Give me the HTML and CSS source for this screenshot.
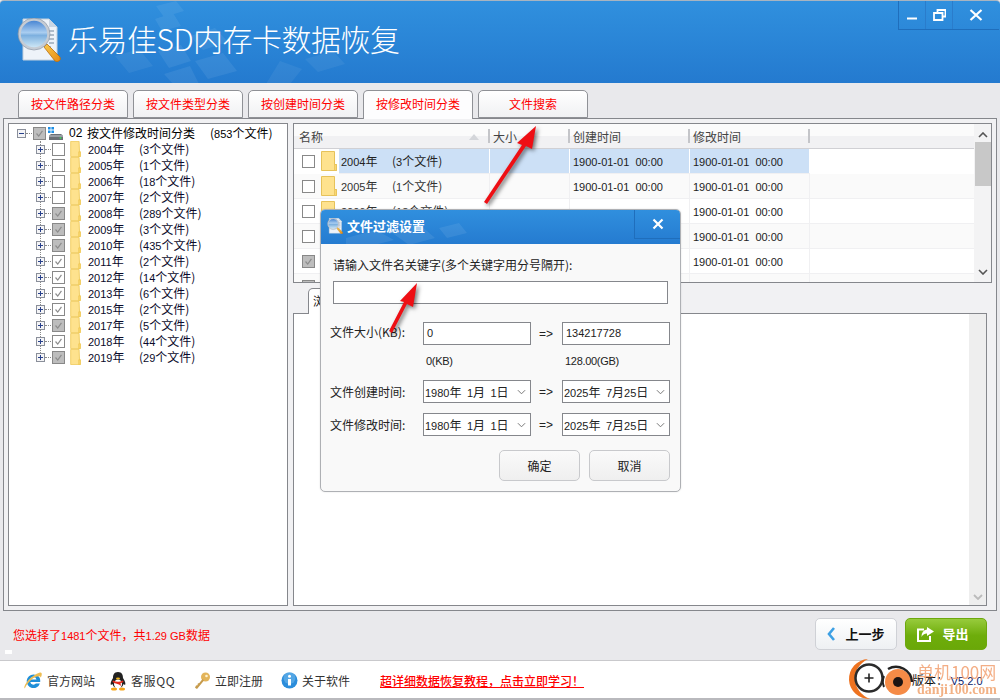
FILE: index.html
```html
<!DOCTYPE html>
<html lang="zh-CN">
<head>
<meta charset="utf-8">
<title>乐易佳SD内存卡数据恢复</title>
<link rel="stylesheet" href="styles.css">
</head>
<body>
<svg class="defs" width="0" height="0" aria-hidden="true">
  <defs>
    <linearGradient id="lens" x1="0" y1="0" x2="0" y2="1"><stop offset="0" stop-color="#3f7fd0"/><stop offset=".45" stop-color="#a9cdf0"/><stop offset=".55" stop-color="#7db0df"/><stop offset="1" stop-color="#d5ecf8"/></linearGradient>
    <linearGradient id="hand" x1="0" y1="0" x2="1" y2="1"><stop offset="0" stop-color="#f9c94a"/><stop offset="1" stop-color="#e88a12"/></linearGradient>
    <symbol id="logo" viewBox="0 0 44 44">
      <path d="M6 1h26l8 8v33H6z" fill="#eef3f9" stroke="#c3cfdc"/>
      <path d="M32 1v8h8z" fill="#c9d6e4"/>
      <path d="M29 13h8M31 17h6M32 21h5M32 25h5M32 29h2" stroke="#9aaabb" stroke-width="1.5"/>
      <path d="M27 29l3-3 13 13q1 3-1 4t-4 0z" fill="url(#hand)" stroke="#b86f10" stroke-width=".8"/>
      <circle cx="17" cy="16" r="14.5" fill="url(#lens)" stroke="#c6ccd4" stroke-width="2.6"/>
      <circle cx="17" cy="16" r="16" fill="none" stroke="#8b95a3" stroke-width=".7"/>
    </symbol>
    <symbol id="folder" viewBox="0 0 13 20">
      <path d="M.5.5h10.5l.5 13h1v6H.5z" fill="#fee28e" stroke="#eec650"/>
      <path d="M10.5 13.5h2v6h-2z" fill="#fbd76f" stroke="#eec650" stroke-width=".8"/>
    </symbol>
    <symbol id="folder-big" viewBox="0 0 16 20">
      <path d="M.5.5h13v13h2v6H.5z" fill="#fee28e" stroke="#e6c25a"/>
      <path d="M13.5 13.5h2v6h-2z" fill="#fbd76f" stroke="#e6c25a" stroke-width=".8"/>
    </symbol>
    <symbol id="plus" viewBox="0 0 9 9">
      <rect x=".5" y=".5" width="8" height="8" fill="#f4f4f6" stroke="#8a8f9a"/>
      <path d="M2 4.5h5M4.5 2v5" stroke="#27408b"/>
    </symbol>
    <symbol id="tick" viewBox="0 0 13 13">
      <path d="M3 6.5l2.6 3L10 3.5" fill="none" stroke="#8c8c8c" stroke-width="1.4"/>
    </symbol>
    <symbol id="chev" viewBox="0 0 10 6">
      <path d="M1 1l4 4 4-4" fill="none" stroke="#777" stroke-width="1.1"/>
    </symbol>
  </defs>
</svg>

<div class="window">
  <header class="titlebar">
    <svg class="deco" viewBox="0 0 1000 83" aria-hidden="true">
      <path d="M156 5l20-5 8 10-20 6zM155 18l18-6 8 13-19 5zM190 35l25-8 13 14-25 8zM195 60l28-8 14 18-29 8zM158 50l23-6 10 16-22 7zM190 65l-26 8 9 10h26z" fill="#fff" opacity=".07"/>
      <path d="M115 55l24-7 14 17-24 7zM305 58l28-8 12 13-27 8zM280 60l22 8-12 15h-24z" fill="#fff" opacity=".06"/>
    </svg>
    <svg class="app-icon"><use href="#logo"/></svg>
    <h1 class="app-title">乐易佳SD内存卡数据恢复</h1>
    <div class="wincontrols">
      <div class="winbtn"><svg width="12" height="12" viewBox="0 0 12 12"><path d="M1 9.500h10" stroke="#fff" stroke-width="2"/></svg></div>
      <div class="winbtn"><svg width="14" height="12" viewBox="0 0 14 12"><path d="M5.500 3.500V1h8v6.500h-3M2 4h8.500v7H2z" fill="none" stroke="#fff" stroke-width="1.800"/></svg></div>
      <div class="winbtn"><svg width="14" height="12" viewBox="0 0 14 12"><path d="M1.500 1l11 10M12.500 1l-11 10" stroke="#fff" stroke-width="2.200"/></svg></div>
    </div>
  </header>

  <nav class="tabs">
    <div class="tab">按文件路径分类</div>
    <div class="tab">按文件类型分类</div>
    <div class="tab">按创建时间分类</div>
    <div class="tab tab-active">按修改时间分类</div>
    <div class="tab">文件搜索</div>
  </nav>

  <main class="panel">
    <section class="tree">
      <div class="tree-root">
        <span class="root-exp"><i></i></span><span class="dots"></span>
        <span class="chk chk-fill"><svg><use href="#tick"/></svg></span>
        <svg class="drive" width="15" height="15" viewBox="0 0 15 15"><path d="M0 1h2.600v2.600H0zM3.400 1H6v2.600H3.400zM0 4.400h2.600V7H0zM3.400 4.400H6V7H3.400z" fill="#1e8fe6"/><path d="M1 9.500L3 8h10l2 1.500V14H1z" fill="#6b6f76"/><path d="M1 9.500h14v1H1z" fill="#c9cdd2"/><circle cx="12.500" cy="12" r="1" fill="#3ecf5a"/></svg>
        <span class="root-num">02</span><span class="root-name">按文件修改时间分类</span><span class="root-count">(<b class="n">853</b>个文件)</span>
      </div>
      <div class="tree-list">
        <div class="node"><svg class="exp-p"><use href="#plus"/></svg><span class="dots"></span><span class="chk"></span><svg class="fold"><use href="#folder"/></svg><span class="yr"><b class="n">2004</b>年</span><span class="ct">(<b class="n">3</b>个文件)</span></div>
        <div class="node"><svg class="exp-p"><use href="#plus"/></svg><span class="dots"></span><span class="chk"></span><svg class="fold"><use href="#folder"/></svg><span class="yr"><b class="n">2005</b>年</span><span class="ct">(<b class="n">1</b>个文件)</span></div>
        <div class="node"><svg class="exp-p"><use href="#plus"/></svg><span class="dots"></span><span class="chk"></span><svg class="fold"><use href="#folder"/></svg><span class="yr"><b class="n">2006</b>年</span><span class="ct">(<b class="n">18</b>个文件)</span></div>
        <div class="node"><svg class="exp-p"><use href="#plus"/></svg><span class="dots"></span><span class="chk"></span><svg class="fold"><use href="#folder"/></svg><span class="yr"><b class="n">2007</b>年</span><span class="ct">(<b class="n">2</b>个文件)</span></div>
        <div class="node"><svg class="exp-p"><use href="#plus"/></svg><span class="dots"></span><span class="chk chk-fill"><svg><use href="#tick"/></svg></span><svg class="fold"><use href="#folder"/></svg><span class="yr"><b class="n">2008</b>年</span><span class="ct">(<b class="n">289</b>个文件)</span></div>
        <div class="node"><svg class="exp-p"><use href="#plus"/></svg><span class="dots"></span><span class="chk chk-fill"><svg><use href="#tick"/></svg></span><svg class="fold"><use href="#folder"/></svg><span class="yr"><b class="n">2009</b>年</span><span class="ct">(<b class="n">3</b>个文件)</span></div>
        <div class="node"><svg class="exp-p"><use href="#plus"/></svg><span class="dots"></span><span class="chk chk-fill"><svg><use href="#tick"/></svg></span><svg class="fold"><use href="#folder"/></svg><span class="yr"><b class="n">2010</b>年</span><span class="ct">(<b class="n">435</b>个文件)</span></div>
        <div class="node"><svg class="exp-p"><use href="#plus"/></svg><span class="dots"></span><span class="chk"><svg><use href="#tick"/></svg></span><svg class="fold"><use href="#folder"/></svg><span class="yr"><b class="n">2011</b>年</span><span class="ct">(<b class="n">2</b>个文件)</span></div>
        <div class="node"><svg class="exp-p"><use href="#plus"/></svg><span class="dots"></span><span class="chk"><svg><use href="#tick"/></svg></span><svg class="fold"><use href="#folder"/></svg><span class="yr"><b class="n">2012</b>年</span><span class="ct">(<b class="n">14</b>个文件)</span></div>
        <div class="node"><svg class="exp-p"><use href="#plus"/></svg><span class="dots"></span><span class="chk"><svg><use href="#tick"/></svg></span><svg class="fold"><use href="#folder"/></svg><span class="yr"><b class="n">2013</b>年</span><span class="ct">(<b class="n">6</b>个文件)</span></div>
        <div class="node"><svg class="exp-p"><use href="#plus"/></svg><span class="dots"></span><span class="chk"><svg><use href="#tick"/></svg></span><svg class="fold"><use href="#folder"/></svg><span class="yr"><b class="n">2015</b>年</span><span class="ct">(<b class="n">2</b>个文件)</span></div>
        <div class="node"><svg class="exp-p"><use href="#plus"/></svg><span class="dots"></span><span class="chk chk-fill"><svg><use href="#tick"/></svg></span><svg class="fold"><use href="#folder"/></svg><span class="yr"><b class="n">2017</b>年</span><span class="ct">(<b class="n">5</b>个文件)</span></div>
        <div class="node"><svg class="exp-p"><use href="#plus"/></svg><span class="dots"></span><span class="chk"><svg><use href="#tick"/></svg></span><svg class="fold"><use href="#folder"/></svg><span class="yr"><b class="n">2018</b>年</span><span class="ct">(<b class="n">44</b>个文件)</span></div>
        <div class="node"><svg class="exp-p"><use href="#plus"/></svg><span class="dots"></span><span class="chk chk-fill"><svg><use href="#tick"/></svg></span><svg class="fold"><use href="#folder"/></svg><span class="yr"><b class="n">2019</b>年</span><span class="ct">(<b class="n">29</b>个文件)</span></div>
      </div>
    </section>

    <section class="right">
      <div class="list">
        <div class="table">
          <div class="thead">
            <div class="th th-name">名称<svg class="sort" width="10" height="6" viewBox="0 0 10 6"><path d="M5 0l5 6H0z" fill="#d4d6da"/></svg></div>
            <div class="th">大小</div>
            <div class="th">创建时间</div>
            <div class="th">修改时间</div>
            <div class="th-rest"></div>
          </div>
          <div class="row row-sel"><div class="c-name"><span class="halo"><span class="chk"></span><svg class="fold-b"><use href="#folder-big"/></svg></span><span class="nm"><b class="n">2004</b>年</span><span class="nc">(<b class="n">3</b>个文件)</span></div><div class="c"></div><div class="c c-date">1900-01-01  00:00</div><div class="c c-date">1900-01-01  00:00</div></div>
          <div class="row row-alt"><div class="c-name"><span class="halo"><span class="chk"></span><svg class="fold-b"><use href="#folder-big"/></svg></span><span class="nm"><b class="n">2005</b>年</span><span class="nc">(<b class="n">1</b>个文件)</span></div><div class="c"></div><div class="c c-date">1900-01-01  00:00</div><div class="c c-date">1900-01-01  00:00</div></div>
          <div class="row"><div class="c-name"><span class="halo"><span class="chk"></span><svg class="fold-b"><use href="#folder-big"/></svg></span><span class="nm"><b class="n">2006</b>年</span><span class="nc">(<b class="n">18</b>个文件)</span></div><div class="c"></div><div class="c c-date"></div><div class="c c-date">1900-01-01  00:00</div></div>
          <div class="row row-alt"><div class="c-name"><span class="halo"><span class="chk"></span><svg class="fold-b"><use href="#folder-big"/></svg></span></div><div class="c"></div><div class="c c-date"></div><div class="c c-date">1900-01-01  00:00</div></div>
          <div class="row"><div class="c-name"><span class="halo"><span class="chk chk-fill"><svg><use href="#tick"/></svg></span><svg class="fold-b"><use href="#folder-big"/></svg></span></div><div class="c"></div><div class="c c-date"></div><div class="c c-date">1900-01-01  00:00</div></div>
          <div class="row row-alt"><div class="c-name"><span class="halo"><span class="chk chk-fill"></span></span></div><div class="c"></div><div class="c c-date"></div><div class="c c-date"></div></div>
        </div>
        <div class="vscroll">
          <svg class="sb-up" width="10" height="6" viewBox="0 0 10 6"><path d="M1 5l4-4 4 4" fill="none" stroke="#555" stroke-width="1.600"/></svg>
          <div class="thumb"></div>
          <svg class="sb-down" width="10" height="6" viewBox="0 0 10 6"><path d="M1 1l4 4 4-4" fill="none" stroke="#555" stroke-width="1.600"/></svg>
        </div>
      </div>
      <div class="subtab">浏览</div>
      <div class="preview">
        <div class="vscroll-flat"><svg width="10" height="6" viewBox="0 0 10 6"><path d="M1 1l4 4 4-4" fill="none" stroke="#bbb" stroke-width="1.800"/></svg></div>
      </div>
    </section>
  </main>

  <div class="status">
    <div class="status-text">您选择了<b class="n">1481</b>个文件，共<b class="n">1.29 GB</b>数据</div>
    <div class="actions">
      <div class="btn btn-back"><svg width="9" height="14" viewBox="0 0 9 14"><path d="M7 1L2 7l5 6" fill="none" stroke="#3da0e4" stroke-width="2.600"/></svg>上一步</div>
      <div class="btn btn-export"><svg width="17" height="15" viewBox="0 0 17 15"><path d="M7 2.500H1v11.500h12V9" fill="none" stroke="#fff" stroke-width="2"/><path d="M10 0l7 4.500-7 4.500V6.500Q6 6.500 4.500 10 4.500 3 10 2.500z" fill="#fff"/></svg>导出</div>
    </div>
  </div>
  <span class="grip"></span>

  <footer class="footer">
    <div class="flink">
      <svg width="20" height="20" viewBox="0 0 20 20"><path d="M10.500 3.500a6.800 6.800 0 1 0 6.400 9h-4a3.200 3.200 0 0 1-5.600-1.600h9.900c.6-4.500-2.400-7.400-6.700-7.400zM7.300 8.400a3.200 3.200 0 0 1 6.200 0z" fill="#1f8fd8" fill-rule="evenodd"/><path d="M1.500 17.500C0 14.500 8 4 17 1.500c2.500-.5 2 3 .8 5C17 3.500 9 5.500 3 15c-.5 1-1 2-1.500 2.500z" fill="#edbd53"/></svg>
      <span>官方网站</span>
    </div>
    <div class="flink">
      <svg width="18" height="20" viewBox="0 0 18 20"><path d="M9 1c4 0 5 3 5 6 2 3 3 6 2 7l-1.500-1c-.5 2-1.500 3-2.500 3.500H6C5 16 4 15 3.500 13L2 14C1 13 2 10 4 7c0-3 1-6 5-6z" fill="#222"/><ellipse cx="9" cy="13" rx="4" ry="4.500" fill="#fff"/><path d="M4 9.500q5 2.500 10 0l.5 1.500q-2 1-3 1.300l.5 2.700-2-1.500Q5 12 3.500 11z" fill="#e22a1c"/><ellipse cx="9" cy="7.500" rx="2" ry="1" fill="#f5b81a"/><ellipse cx="5" cy="18" rx="3" ry="1.500" fill="#f5a51a"/><ellipse cx="13" cy="18" rx="3" ry="1.500" fill="#f5a51a"/></svg>
      <span class="qq">客服QQ</span>
    </div>
    <div class="flink">
      <svg width="16" height="18" viewBox="0 0 16 18"><circle cx="10.500" cy="5" r="4.500" fill="#e3b45a"/><circle cx="11.500" cy="4" r="1.300" fill="#fff3cf"/><path d="M7.500 7l1.500 1.500L2 17l-2-1.200 1-2.300 1.500-.3.300-1.700 1.500-.5z" fill="#c69b4d"/></svg>
      <span>立即注册</span>
    </div>
    <div class="flink">
      <svg width="17" height="17" viewBox="0 0 17 17"><circle cx="8.500" cy="8.500" r="8" fill="#2b8ddb"/><circle cx="8.500" cy="6" r="6" fill="#7cc0f0" opacity=".5"/><circle cx="8.500" cy="4.200" r="1.500" fill="#fff"/><path d="M7 7h3v6.500H7z" fill="#fff"/></svg>
      <span>关于软件</span>
    </div>
    <a class="promo" href="#">超详细数据恢复教程，点击立即学习！</a>
    <span class="version">版本： <b class="v">V5.2.0</b></span>
  </footer>

  <div class="watermark">
    <svg class="wm-logo" width="70" height="44" viewBox="0 0 70 44"><path d="M20 2A20 20 0 0 0 22 42Q8 36 7 22 7 9 20 2z" fill="#ee7320"/><circle cx="21" cy="21" r="13.500" fill="#fff" stroke="#2b2b2b" stroke-width="2.500"/><path d="M16.500 21h9M21 16.500v9" stroke="#222" stroke-width="1.600"/><circle cx="50" cy="25" r="13" fill="#f58b47"/><circle cx="50" cy="25" r="5" fill="#1d1412"/><path d="M40 12a16 16 0 0 1 24 13" fill="none" stroke="#222" stroke-width="2.500"/><path d="M36 30a14 14 0 0 1 0-11" fill="none" stroke="#222" stroke-width="2"/></svg>
    <span class="wm-cn">单机100网</span>
    <span class="wm-en">danji100.com</span>
  </div>

  <div class="dialog">
    <div class="dlg-head">
      <svg class="dlg-deco" viewBox="0 0 360 35" aria-hidden="true"><path d="M25 28l30-8 18 10-20 5H25zM70 22l28-8 16 14-26 7zM118 18l20-5 8 10-20 5z" fill="#fff" opacity=".08"/></svg>
      <svg class="dlg-icon"><use href="#logo"/></svg>
      <span class="dlg-title">文件过滤设置</span>
      <div class="dlg-close"><svg width="12" height="12" viewBox="0 0 12 12"><path d="M1.500 1.500l9 9M10.500 1.500l-9 9" stroke="#fff" stroke-width="2.200"/></svg></div>
    </div>
    <div class="dlg-body">
      <div class="kw-label">请输入文件名关键字(多个关键字用分号隔开):</div>
      <div class="kw-input"></div>
      <div class="form">
        <div class="lbl lbl-size">文件大小(KB):</div><div class="field">0</div><div class="arr">=&gt;</div><div class="field">134217728</div>
        <div></div><div class="hint">0(KB)</div><div></div><div class="hint">128.00(GB)</div>
        <div class="lbl">文件创建时间:</div><div class="field field-d"><b class="n">1980</b>年&nbsp;&nbsp;<b class="n">1</b>月&nbsp;&nbsp;<b class="n">1</b>日<svg><use href="#chev"/></svg></div><div class="arr">=&gt;</div><div class="field field-d"><b class="n">2025</b>年&nbsp;&nbsp;<b class="n">7</b>月<b class="n">25</b>日<svg><use href="#chev"/></svg></div>
        <div class="lbl">文件修改时间:</div><div class="field field-d"><b class="n">1980</b>年&nbsp;&nbsp;<b class="n">1</b>月&nbsp;&nbsp;<b class="n">1</b>日<svg><use href="#chev"/></svg></div><div class="arr">=&gt;</div><div class="field field-d"><b class="n">2025</b>年&nbsp;&nbsp;<b class="n">7</b>月<b class="n">25</b>日<svg><use href="#chev"/></svg></div>
      </div>
      <div class="dlg-actions">
        <div class="dlg-btn">确定</div>
        <div class="dlg-btn">取消</div>
      </div>
    </div>
  </div>

  <svg class="arrows" viewBox="0 0 1000 700" aria-hidden="true">
    <path d="M536 126L532 149 526 146 487 204 484 202 522 145 517 143z" fill="#ee0f14"/>
    <path d="M417 283L413 307 407 304 392 333 389 331 404 302 400 301z" fill="#ee0f14"/>
  </svg>
</div>
</body>
</html>
```
FILE: styles.css
```css
* { box-sizing: border-box; }
html, body { margin: 0; padding: 0; }
body {
  width: 1000px; height: 700px; overflow: hidden;
  font: 12px/16px "Noto Sans CJK SC", "Liberation Sans", sans-serif;
  color: #111; background: #fff;
}
.defs { position: absolute; }
.n { font: 400 11px/16px "Liberation Sans", sans-serif; }

.window {
  position: relative; width: 1000px; height: 700px;
  display: flex; flex-direction: column;
  background: #e9e9ec;
  border-bottom: 2px solid #b9b9bd;
}

/* title bar */
.titlebar {
  position: relative; height: 83px; flex: none;
  display: flex; align-items: flex-start;
  background: linear-gradient(#3090de, #247acf);
  border-top: 1px solid #a8b4c0;
  border-radius: 4px 4px 0 0;
}
.deco { position: absolute; left: 0; top: 0; width: 1000px; height: 83px; }
.app-icon { position: relative; width: 44px; height: 44px; margin: 17px 0 0 17px; flex: none; }
.app-title {
  position: relative; margin: 14px 0 0 7px; letter-spacing: -.5px;
  font: 300 30px/46px "Noto Sans CJK SC", sans-serif; color: #fff;
}
.wincontrols {
  position: relative; margin-left: auto; margin-top: 0; margin-right: 1px;
  display: flex; width: 101px; height: 29px;
  border-left: 1px solid #1f6ebc; border-bottom: 1px solid #1f6ebc;
}
.winbtn {
  width: 27px; flex: none; display: flex; align-items: center; justify-content: center;
  border-right: 1px solid #2a7ccb;
}
.winbtn:last-child { border-right: 0; flex: 1; }

/* tabs */
.tabs { display: flex; gap: 5px; height: 35px; padding: 7px 0 0 18px; flex: none; position: relative; z-index: 1; }
.tab {
  width: 110px; height: 28px; text-align: center; line-height: 26px;
  color: #f00; border: 1px solid #8f9196; border-bottom: 1px solid #8f9196;
  border-radius: 5px 5px 0 0;
  background: linear-gradient(#fff, #f0f1f3);
}
.tab-active { height: 29px; background: #fdfdfe; border-bottom: 0; }

/* main panel */
.panel {
  flex: none; height: 493px; margin: 0 3px;
  display: flex; gap: 5px; padding: 4px;
  border: 1px solid #85878c; background: #f1f1f3;
}
.tree { width: 280px; flex: none; border: 1px solid #85878c; background: #fff; padding: 1px 0 0 8px; }
.tree-root, .node { display: flex; align-items: center; height: 16px; white-space: nowrap; color: #000; }
.root-exp {
  width: 9px; height: 9px; border: 1px solid #8a8f9a; background: #f4f4f6;
  display: flex; align-items: center; justify-content: center; flex: none;
}
.root-exp i { width: 5px; height: 1px; background: #27408b; }
.dots { width: 6px; border-top: 1px dotted #888; flex: none; margin-right: 1px; }
.chk {
  width: 13px; height: 13px; flex: none; display: inline-block;
  border: 1px solid #888; background: #fff;
}
.chk svg { display: block; width: 11px; height: 11px; }
.chk-fill { background: #bdbdbd; }
.drive { margin: 0 6px 0 2px; flex: none; }
.root-num { width: 18px; font: 12px "Liberation Sans", sans-serif; flex: none; }
.root-name { width: 123px; flex: none; }
.tree-list { position: relative; padding-left: 19px; }
.tree-list::before {
  content: ""; position: absolute; left: 23px; top: 0; bottom: 8px;
  border-left: 1px dotted #888;
}
.exp-p { width: 9px; height: 9px; flex: none; position: relative; }
.fold { width: 13px; height: 16px; margin-left: 4px; flex: none; }
.yr { width: 51px; margin-left: 6px; flex: none; color: #0a0a2a; }
.ct { flex: none; color: #0a0a2a; }

/* right column */
.right { flex: 1; display: flex; flex-direction: column; min-width: 0; }
.list { height: 160px; flex: none; display: flex; border: 1px solid #85878c; background: #fff; overflow: hidden; }
.table { flex: 1; min-width: 0; overflow: hidden; }
.thead { display: flex; height: 25px; background: linear-gradient(#fbfbfb 50%, #f1f1f3 50%); border-bottom: 1px solid #d0d0d4; color: #444; }
.th { width: 80px; position: relative; line-height: 25px; padding-left: 3px; flex: none; }
.th:nth-child(3), .th:nth-child(4) { width: 120px; }
.th-name { width: 196px; padding-left: 5px; }
.th::after { content: ""; position: absolute; right: 0; top: 5px; bottom: 5px; width: 2px; background: #c4c5c9; }
.th-rest { flex: 1; }
.sort { position: absolute; left: 175px; top: 10px; }
.row { display: flex; height: 25px; border-bottom: 1px solid #f0f0f2; background: #fff; }
.row-alt { background: #fafafa; }
.c-name { width: 196px; flex: none; display: flex; align-items: center; color: #333; border-right: 1px solid #f0f0f2; }
.c { width: 80px; flex: none; border-right: 1px solid #f0f0f2; }
.c-date { width: 120px; padding-left: 3px; font: 11px/26px "Liberation Sans", sans-serif; white-space: pre; color: #222; }
.row-sel { width: 516px; background: #cce0f6; }
.row-sel .c-name, .row-sel .c { border-right: 1px solid #fff; }
.row-sel .halo { background: #fff; }
.row-sel .nm, .row-sel .nc { color: #222; }
.halo { display: flex; align-items: center; height: 25px; padding-left: 8px; width: 45px; flex: none; }
.fold-b { width: 16px; height: 20px; margin-left: 6px; flex: none; }
.nm { width: 51px; margin-left: 2px; flex: none; }
.vscroll { width: 17px; flex: none; background: #f3f3f4; display: flex; flex-direction: column; align-items: center; }
.sb-up { margin-top: 8px; flex: none; }
.thumb { width: 16px; height: 44px; margin-top: 4px; background: #c8c8c8; flex: none; }
.sb-down { margin-top: auto; margin-bottom: 7px; flex: none; }

.subtab {
  margin: 5px 0 -1px 15px; width: 60px; height: 26px; flex: none; position: relative;
  padding: 4px 0 0 4px; background: #fff; border: 1px solid #85878c; border-bottom: 0;
  border-radius: 5px 5px 0 0;
}
.preview {
  flex: 1; width: 694px; border: 1px solid #85878c; background: #fff;
  display: flex; justify-content: flex-end;
}
.vscroll-flat { width: 17px; background: #eeeeee; display: flex; align-items: flex-end; justify-content: center; padding-bottom: 5px; }

/* status strip */
.status { height: 49px; flex: none; display: flex; justify-content: space-between; padding: 7px 13px 0; }
.status-text { color: #f00; margin-top: 9px; }
.actions { display: flex; gap: 8px; }
.btn {
  width: 82px; height: 32px; border-radius: 5px; display: flex; align-items: center; justify-content: center;
  gap: 9px; font-weight: 700; font-size: 13px; border: 1px solid #cfd1d6;
  background: linear-gradient(#fff, #eef0f3); color: #111;
}
.btn-export { color: #fff; border-color: #6da80e; background: linear-gradient(#97cb3c, #6ead0b 55%, #6aa808); gap: 8px; padding-right: 6px; }
.grip { position: absolute; left: 5px; top: 650px; width: 7px; height: 4px; background: #fff; }

/* footer */
.footer {
  height: 38px; flex: none; display: flex; align-items: center;
  background: #fff; border-top: 1px solid #c9c9cc; padding: 2px 0 0 23px; color: #333;
}
.flink { display: flex; align-items: center; gap: 4px; width: 86px; flex: none; white-space: nowrap; }
.qq { letter-spacing: .6px; }
.promo { margin-left: 13px; color: #f00; text-decoration: underline; font-weight: 500; white-space: nowrap; }
.version { position: absolute; left: 912px; top: 672px; color: #111; white-space: nowrap; }
.v { font: 400 11px/16px "Liberation Sans", sans-serif; color: #0a1a6a; }

/* watermark */
.watermark { position: absolute; left: 848px; top: 657px; width: 152px; height: 43px; pointer-events: none; }
.wm-logo { position: absolute; left: 0; top: 0; }
.wm-cn { position: absolute; left: 69px; top: 4px; font: 400 17px/22px "Noto Sans CJK SC", sans-serif; color: #f2a071; opacity: .85; white-space: nowrap; }
.wm-en { position: absolute; left: 69px; top: 25px; font: 700 13.900px/16px "Liberation Serif", serif; color: #f0a470; opacity: .85; white-space: nowrap; }

/* dialog */
.dialog {
  position: absolute; left: 320px; top: 209px; width: 361px; height: 283px;
  background: #f9f9f9; border: 1px solid #aeb0b4; border-radius: 5px;
  box-shadow: 0 0 2px rgba(0,0,0,.12); overflow: hidden;
  display: flex; flex-direction: column;
}
.dlg-head {
  position: relative; height: 34px; flex: none; display: flex; align-items: center;
  background: linear-gradient(#308fde, #257bd0); padding: 0 0 2px 6px;
}
.dlg-deco { position: absolute; left: 0; top: 0; width: 360px; height: 35px; }
.dlg-icon { position: relative; width: 16px; height: 16px; flex: none; }
.dlg-title { position: relative; margin-left: 4px; color: #fff; font-weight: 700; font-size: 13px; }
.dlg-close {
  position: absolute; right: 0; top: 0; width: 46px; height: 29px;
  display: flex; align-items: center; justify-content: center;
  border-left: 1px solid #1f6ebc; border-bottom: 1px solid #1f6ebc;
}
.dlg-body { flex: 1; padding: 13px 10px 0 9px; }
.kw-label { margin-left: 3px; height: 16px; line-height: 16px; color: #222; }
.kw-input { margin: 8px 2px 0 3px; height: 23px; background: #fff; border: 1px solid #85878c; }
.form {
  display: grid; grid-template-columns: 93px 108px 31px 108px; margin-top: 18px;
  grid-template-rows: 23px 35px 33px 23px;
  color: #222;
}
.lbl { line-height: 23px; white-space: nowrap; }
.lbl-size { line-height: 20px; }
.field {
  height: 23px; background: #fff; border: 1px solid #85878c; padding-left: 3px;
  font: 11px/20px "Liberation Sans", "Noto Sans CJK SC", sans-serif; position: relative; white-space: nowrap;
}
.field-d { padding-left: 1px; font: 12px/21px "Noto Sans CJK SC", sans-serif; }
.field-d .n { line-height: 21px; }
.field-d svg { position: absolute; right: 4px; top: 8px; width: 9px; height: 6px; }
.arr { padding-left: 8px; font: 12px/25px "Liberation Sans", sans-serif; }
.hint { padding: 8px 0 0 3px; font: 11px/16px "Liberation Sans", sans-serif; letter-spacing: -.3px; }
.dlg-actions { display: flex; justify-content: flex-end; gap: 9px; margin-top: 14px; }
.dlg-btn {
  width: 81px; height: 31px; text-align: center; line-height: 29px; border: 1px solid #c8c9cc; border-radius: 5px;
  background: linear-gradient(#fafafa, #efefef); color: #222;
}

.arrows { position: absolute; left: 0; top: 0; width: 1000px; height: 700px; pointer-events: none; filter: drop-shadow(2px 2px 2px rgba(0,0,0,.55)); }
```
